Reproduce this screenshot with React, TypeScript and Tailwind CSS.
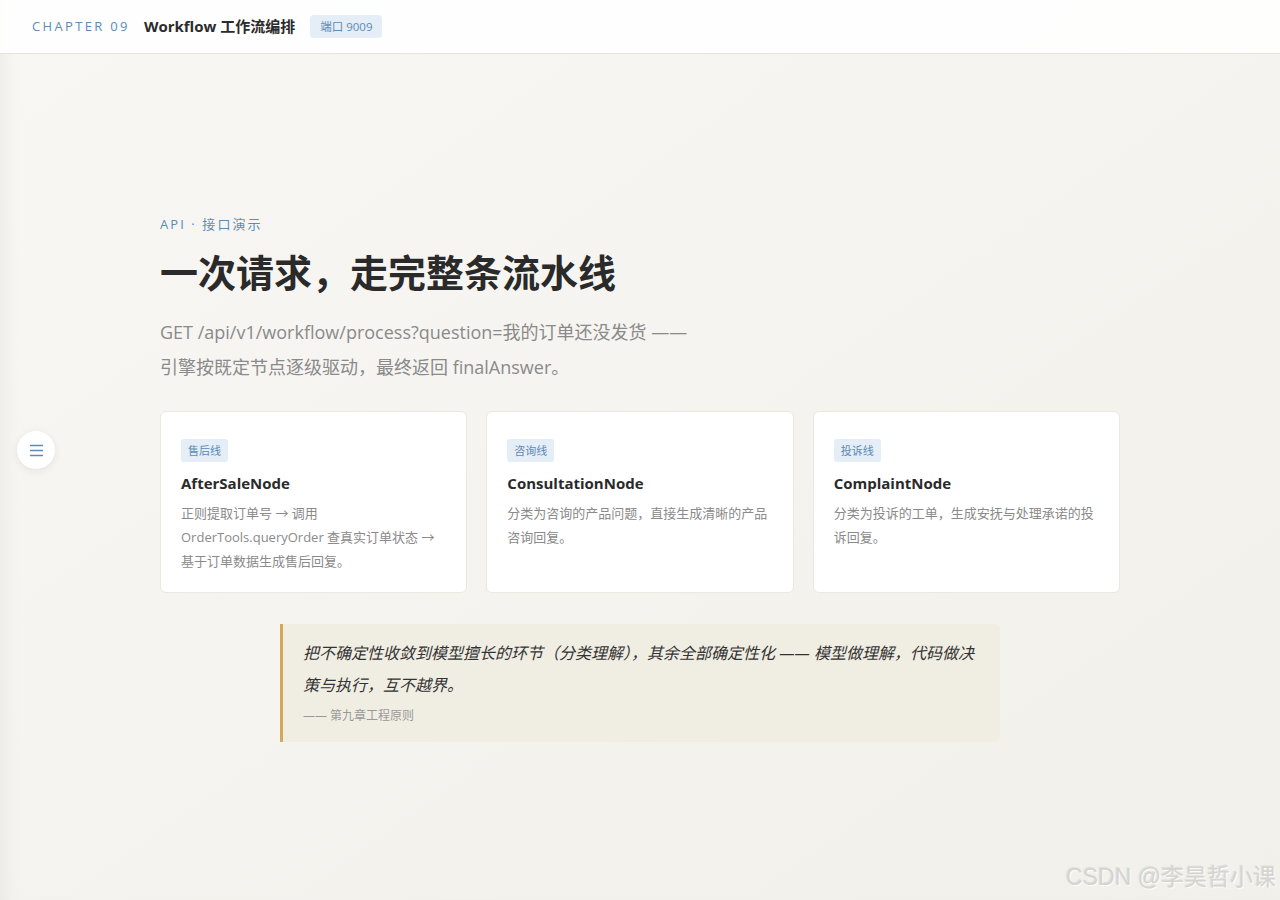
import React from 'react'

const cards = [
  {
    tag: '售后线',
    title: 'AfterSaleNode',
    desc: '正则提取订单号 → 调用 OrderTools.queryOrder 查真实订单状态 → 基于订单数据生成售后回复。',
  },
  {
    tag: '咨询线',
    title: 'ConsultationNode',
    desc: '分类为咨询的产品问题，直接生成清晰的产品咨询回复。',
  },
  {
    tag: '投诉线',
    title: 'ComplaintNode',
    desc: '分类为投诉的工单，生成安抚与处理承诺的投诉回复。',
  },
]

const font = "font-['Open_Sans','Noto_Sans_CJK_SC',sans-serif]"

export default function App() {
  return (
    <div
      className={`relative min-h-[900px] flex flex-col bg-gradient-to-br from-[#f8f7f4] to-[#f2f0ea] ${font} shadow-[inset_14px_0_18px_-10px_rgba(0,0,0,0.05)]`}
    >
      <header className="h-[54px] shrink-0 flex items-center px-8 bg-white/90 border-b border-[#e6e3da]">
        <span className="text-[13px] tracking-[0.18em] text-[#5b8bb8]">CHAPTER 09</span>
        <span className="ml-[14px] text-[15px] font-bold text-[#2b2b2b]">Workflow 工作流编排</span>
        <span className="ml-[15px] text-[11.5px] text-[#5b8bb8] bg-[#e5edf6] rounded px-[10px] py-[4px] leading-[15px]">
          端口 9009
        </span>
      </header>

      <button className="absolute left-[17px] top-[431px] w-[38px] h-[38px] rounded-full bg-white shadow-[0_2px_8px_rgba(0,0,0,0.08)] flex items-center justify-center">
        <svg width="15" height="13" viewBox="0 0 15 13" fill="none">
          <path d="M1 1.5h13M1 6.5h13M1 11.5h13" stroke="#5b8bb8" strokeWidth="1.6" />
        </svg>
      </button>

      <main className="flex-1 flex items-center justify-center pt-[3px]">
        <div className="w-[960px] flex flex-col">
          <div className="text-[13px] tracking-[0.16em] text-[#5b8bb8]">API · 接口演示</div>
          <h1 className="mt-[13px] text-[38px] leading-[50px] font-bold text-[#2a2a2a]">
            一次请求，走完整条流水线
          </h1>
          <p className="mt-[18px] text-[18px] leading-[35px] text-[#8a8a8a] max-w-[548px]">
            GET /api/v1/workflow/process?question=我的订单还没发货 —— 引擎按既定节点逐级驱动，最终返回 finalAnswer。
          </p>

          <div className="mt-[26px] grid grid-cols-3 gap-[19px]">
            {cards.map((c) => (
              <div
                key={c.title}
                className="h-[182px] bg-white border border-[#ebe8e0] rounded-md px-[20px] pt-[25px]"
              >
                <span className="inline-block text-[11px] leading-[15px] text-[#5b8bb8] bg-[#e5edf6] rounded-[3px] px-[7px] py-[4px]">
                  {c.tag}
                </span>
                <div className="mt-[10px] text-[15px] font-bold text-[#2a2a2a] leading-[22px]">{c.title}</div>
                <p className="mt-[7px] text-[13px] leading-[24px] text-[#8a8a8a]">{c.desc}</p>
              </div>
            ))}
          </div>

          <blockquote className="mt-[31px] mx-auto w-[720px] bg-[#f0ede3] border-l-[3px] border-[#d2a85a] rounded-r-md pl-[20px] pr-[12px] pt-[13px] pb-[17px]">
            <p className="italic text-[16px] leading-[32px] text-[#333]">
              把不确定性收敛到模型擅长的环节（分类理解），其余全部确定性化 —— 模型做理解，代码做决策与执行，互不越界。
            </p>
            <div className="mt-[6px] text-[12px] leading-[18px] text-[#999]">—— 第九章工程原则</div>
          </blockquote>
        </div>
      </main>

      <div className="absolute right-[4px] bottom-[6px] text-[23px] text-[#d6d4cf] [text-shadow:1px_1px_1px_rgba(255,255,255,0.9),-1px_-1px_1px_rgba(0,0,0,0.08)] font-['Liberation_Sans','Noto_Sans_CJK_SC',sans-serif]">
        CSDN @李昊哲小课
      </div>
    </div>
  )
}
